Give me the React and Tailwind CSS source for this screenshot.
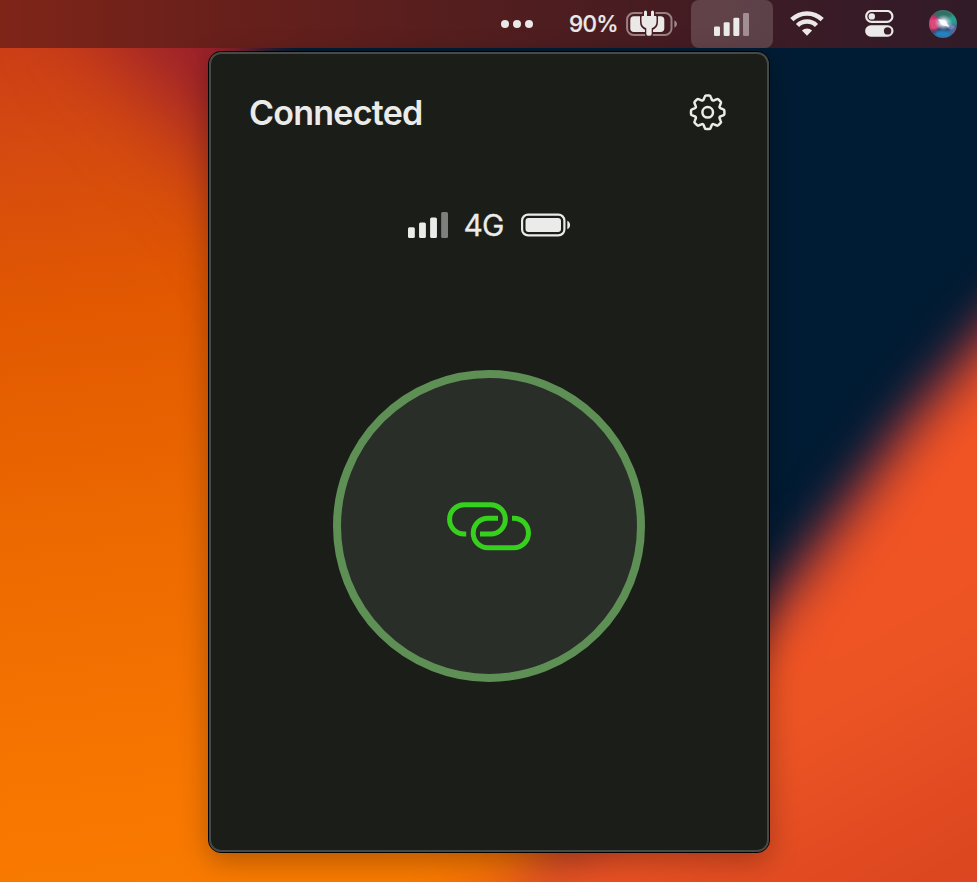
import React from "react";

function Wallpaper() {
  return (
    <svg className="absolute inset-0 h-full w-full" viewBox="0 0 977 882" preserveAspectRatio="none" aria-hidden="true">
      <defs>
        <linearGradient id="amber" gradientUnits="userSpaceOnUse" x1="60" y1="30" x2="160" y2="882">
          <stop offset="0" stopColor="#cb3d18" />
          <stop offset="0.13" stopColor="#d54a10" />
          <stop offset="0.33" stopColor="#e25900" />
          <stop offset="0.6" stopColor="#ed6a00" />
          <stop offset="0.85" stopColor="#f67500" />
          <stop offset="1" stopColor="#f97a00" />
        </linearGradient>
        <linearGradient id="coral" gradientUnits="userSpaceOnUse" x1="800" y1="540" x2="977" y2="860">
          <stop offset="0" stopColor="#f25424" />
          <stop offset="0.45" stopColor="#ec5424" />
          <stop offset="1" stopColor="#dc4620" />
        </linearGradient>
        <filter id="soft" filterUnits="userSpaceOnUse" x="-200" y="-300" width="1600" height="1500" colorInterpolationFilters="sRGB">
          <feGaussianBlur stdDeviation="24" />
        </filter>
        <filter id="softer" filterUnits="userSpaceOnUse" x="-200" y="-300" width="1600" height="1500" colorInterpolationFilters="sRGB">
          <feGaussianBlur stdDeviation="46" />
        </filter>
      </defs>
      <rect width="977" height="882" fill="url(#amber)" />
      <path d="M10 -200 L112 40 L235 170 L320 300 L440 600 L545 830 L700 830 L700 -200Z" fill="#98202c" filter="url(#softer)" />
      <path d="M185 -200 L252 40 L310 180 L370 300 L490 600 L580 780 L1300 780 L1300 -200Z" fill="#001c34" filter="url(#soft)" />
      <path d="M1150 128 L977 328 L905 412 L852 484 L765 600 L680 710 L595 800 L530 880 L530 1000 L1300 1000 L1300 128Z" fill="#a02c40" fillOpacity="0.65" filter="url(#soft)" />
      <path d="M1150 156 L984 353 L915 432 L864 502 L776 618 L690 725 L615 820 L560 868 L460 900 L460 1000 L1300 1000 L1300 156Z" fill="url(#coral)" filter="url(#soft)" />
    </svg>
  );
}

const BAR_STEPS = [
  { x: 0, y: 15 },
  { x: 11, y: 10.3 },
  { x: 22, y: 5.3 },
  { x: 33, y: 0 },
];

function Signal({ className, last }) {
  return (
    <svg className={className} viewBox="0 0 39.8 25.6" preserveAspectRatio="none">
      {BAR_STEPS.map((b, i) => (
        <rect key={b.x} x={b.x} y={b.y} width="6.8" height={25.6 - b.y} rx="1.5" fill={i === 3 ? last : "#ebebe9"} />
      ))}
    </svg>
  );
}

function ChargingBattery() {
  return (
    <svg className="ml-[9px] h-[30px] w-[52px]" viewBox="0 0 52 30">
      <rect x="1.1" y="4.1" width="44.4" height="21.8" rx="6.5" fill="none" stroke="#ebe6e6" strokeOpacity="0.5" strokeWidth="2" />
      <path d="M48.4 11.5c3.4 1.3 3.4 5.8 0 7.1z" fill="#ebe6e6" fillOpacity="0.55" />
      <rect x="4.3" y="7.3" width="34" height="15.6" rx="3.6" fill="#ebe9e8" />
      <path
        d="M18.500 3v4h-2.500v6c0 4 2 5.500 5 6.500v6h4v-6c3-1 5-2.500 5-6.500V7h-2.500V3h-2.500v4h-4V3z"
        fill="#451c22"
        stroke="#451c22"
        strokeWidth="4"
        strokeLinejoin="round"
      />
      <path
        d="M18 3a1.500 1.500 0 0 1 3 0v4h4V3a1.500 1.500 0 0 1 3 0v4h1.500q1 0 1 1v4.600c0 3.800-2 5.900-4.800 6.700V25q0 1.700-1.700 1.700h-2q-1.700 0-1.700-1.700v-5.700c-2.800-.8-4.800-2.900-4.800-6.700V8q0-1 1-1H18z"
        fill="#ebe9e8"
      />
    </svg>
  );
}

function Wifi() {
  return (
    <svg className="ml-[17px] h-[28px] w-[34px]" viewBox="0 0.5 34 28" fill="none" stroke="#ebe9e8">
      <path d="M1.8 10.2a21.6 21.6 0 0 1 30.4 0" strokeWidth="4.5" />
      <path d="M7.5 16a13.5 13.5 0 0 1 19 0" strokeWidth="4.5" />
      <path d="M17 26.2l-5.1-5.100a7.300 7.300 0 0 1 10.200 0z" fill="#ebe9e8" stroke="none" />
    </svg>
  );
}

function ControlCenter() {
  return (
    <svg className="ml-[41px] h-[28px] w-[29px]" viewBox="0 0.5 29 28">
      <rect x="1.2" y="1.500" width="26.200" height="10.800" rx="5.400" fill="none" stroke="#ebe9e8" strokeWidth="2.200" />
      <circle cx="6.800" cy="6.900" r="3.200" fill="#ebe9e8" />
      <rect x="0.100" y="15.700" width="28.400" height="11.500" rx="5.750" fill="#ebe9e8" />
      <circle cx="22.600" cy="21.400" r="3.700" fill="#381c26" />
    </svg>
  );
}

function Siri() {
  return (
    <svg className="ml-[34px] h-[30px] w-[30px]" viewBox="0 0 30 30">
      <defs>
        <clipPath id="orb"><circle cx="15" cy="15" r="14" /></clipPath>
        <filter id="orbBlur" x="-40%" y="-40%" width="180%" height="180%" colorInterpolationFilters="sRGB"><feGaussianBlur stdDeviation="1.6" /></filter>
        <radialGradient id="glow">
          <stop offset="0" stopColor="#fff" />
          <stop offset="0.35" stopColor="#eefcff" stopOpacity="0.85" />
          <stop offset="1" stopColor="#a9dcf5" stopOpacity="0" />
        </radialGradient>
      </defs>
      <g clipPath="url(#orb)">
        <rect width="30" height="30" fill="#2a3554" />
        <g filter="url(#orbBlur)">
          <ellipse cx="17" cy="5" rx="11" ry="5" fill="#2f7263" />
          <ellipse cx="25" cy="12" rx="5" ry="6" fill="#26a28c" />
          <ellipse cx="5" cy="14" rx="6" ry="8" fill="#d43369" />
          <ellipse cx="15" cy="25" rx="9" ry="4" fill="#2483c4" />
          <ellipse cx="25" cy="20" rx="4" ry="5" fill="#56689e" />
        </g>
        <path d="M2 12Q8 7 15 14Q10 23 3 19Z" fill="#f06f9c" fillOpacity="0.35" />
        <path d="M16 15Q23 14 27 18Q22 24 16 15Z" fill="#8f9fd3" fillOpacity="0.5" />
        <ellipse cx="15.500" cy="13.500" rx="9" ry="8" fill="url(#glow)" />
        <path d="M10 10L17 11.500L21.500 18L14 16Z" fill="#fff" fillOpacity="0.9" />
      </g>
      <circle cx="15" cy="15" r="13.500" fill="none" stroke="#a394a2" strokeOpacity="0.2" />
    </svg>
  );
}

function MenuBar() {
  return (
    <header className="relative flex h-12 shrink-0 items-center justify-end bg-[linear-gradient(90deg,#802518_0%,#69201b_22%,#561e1e_45%,#451c22_68%,#3a1b26_82%,#311b28_100%)] pr-[19px] font-[Inter,sans-serif]">
      <svg className="mr-9 h-2 w-8" viewBox="0 0 32 8" fill="#ebe9e8">
        <circle cx="4" cy="4" r="4" />
        <circle cx="16" cy="4" r="4" />
        <circle cx="28" cy="4" r="4" />
      </svg>
      <span className="w-12 whitespace-nowrap text-[22.5px] font-medium leading-none tracking-[-0.7px] text-[#ebe9e8] [-webkit-text-stroke:0.2px_#ebe9e8]">90%</span>
      <ChargingBattery />
      <div className="ml-[13px] flex h-12 w-[82px] items-center justify-center rounded-lg bg-white/17 pr-px">
        <Signal className="h-[23px] w-[35px]" last="#a18f94" />
      </div>
      <Wifi />
      <ControlCenter />
      <Siri />
    </header>
  );
}

const gearPath = (() => {
  const point = (angle, along, across) => {
    const x = along * Math.cos(angle) - across * Math.sin(angle);
    const y = along * Math.sin(angle) + across * Math.cos(angle);
    return `${x.toFixed(2)} ${y.toFixed(2)}`;
  };
  let d = "";
  for (let i = 0; i < 8; i++) {
    const a = (i * Math.PI) / 4;
    d += `${i ? "L" : "M"}${point(a, 13, -4)}`;
    d += `L${point(a, 15.2, -3.1)}Q${point(a, 16.7, -2.8)} ${point(a, 16.7, -1.6)}`;
    d += `L${point(a, 16.7, 1.6)}Q${point(a, 16.7, 2.8)} ${point(a, 15.2, 3.1)}`;
    d += `L${point(a, 13, 4)}`;
    d += `Q${point(a + Math.PI / 8, 12.1, 0)} ${point(a + Math.PI / 4, 13, -4)}`;
  }
  return `${d}Z`;
})();

function Gear() {
  return (
    <svg className="size-9 overflow-visible" viewBox="-17.7 -17.3 36 36" fill="none" stroke="#ebebe9" strokeWidth="2.5" strokeLinejoin="round">
      <path d={gearPath} />
      <circle r="5.3" />
    </svg>
  );
}

function FullBattery() {
  return (
    <svg className="h-[23px] w-[50px] overflow-visible" viewBox="0 0.5 50 23">
      <rect x="1.1" y="1.1" width="42.3" height="20.8" rx="6" fill="none" stroke="#ebebe9" strokeWidth="2.2" />
      <rect x="4.5" y="4.5" width="35.5" height="14" rx="3" fill="#ebebe9" />
      <path d="M46.3 7.3c3.7 1.5 3.7 6.9 0 8.4z" fill="#ebebe9" />
    </svg>
  );
}

function ChainLink() {
  return (
    <svg className="h-[50px] w-[86px]" viewBox="446 501 86 50" fill="none" stroke="#35d11d" strokeWidth="5">
      <path d="M466.2 534H464.2A14.65 14.65 0 0 1 464.2 504.7H490.7A14.65 14.65 0 0 1 490.7 534H480" />
      <path d="M498 518.3H487.9A14.7 14.7 0 0 0 487.9 547.7H513.8A14.7 14.7 0 0 0 513.8 518.3H512" />
    </svg>
  );
}

export default function App() {
  return (
    <div className="relative flex h-[882px] w-[977px] flex-col overflow-hidden font-[Inter,sans-serif] text-[#ebebe9]">
      <Wallpaper />
      <MenuBar />
      <main className="relative ml-[208px] mt-[3px] flex h-[802px] w-[562px] flex-col items-center rounded-[13px] border border-black bg-[#1b1d18] shadow-[0_8px_28px_rgba(0,0,0,0.28)]">
        <div className="flex h-full w-full flex-col items-center rounded-xl border-2 border-[#474946]">
          <div className="mt-[41px] flex h-9 w-full items-center justify-between pl-[38px] pr-[41px]">
            <h1 className="whitespace-nowrap text-[34px] font-semibold leading-9 tracking-[-0.75px]">Connected</h1>
            <Gear />
          </div>
          <div className="mt-[79px] flex h-[30px] items-center">
            <Signal className="h-[26px] w-10" last="#7f807e" />
            <span className="ml-4 w-[41px] whitespace-nowrap text-[30px] leading-[30px] tracking-[-1px] [-webkit-text-stroke:0.3px_#ebebe9]">4G</span>
            <div className="ml-4 flex"><FullBattery /></div>
          </div>
          <button className="mt-[130px] flex size-[312px] items-center justify-center rounded-full border-8 border-[#5e9055] bg-[#2a2e29]" aria-label="Disconnect">
            <ChainLink />
          </button>
        </div>
      </main>
    </div>
  );
}
